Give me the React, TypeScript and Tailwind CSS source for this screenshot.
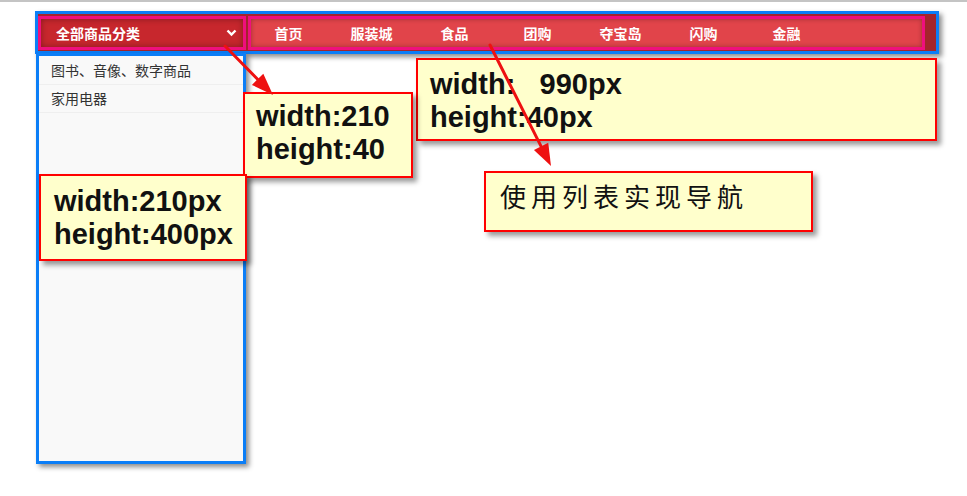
import React from 'react';

const navItems = ['首页', '服装城', '食品', '团购', '夺宝岛', '闪购', '金融'];
const categories = ['图书、音像、数字商品', '家用电器'];

// red callout arrow, head drawn as a filled triangle at (x2, y2)
const Arrow: React.FC<{ x1: number; y1: number; x2: number; y2: number }> = ({ x1, y1, x2, y2 }) => {
  const len = Math.hypot(x2 - x1, y2 - y1);
  const ux = (x2 - x1) / len;
  const uy = (y2 - y1) / len;
  const head = 22;
  const half = 8;
  const bx = x2 - ux * head;
  const by = y2 - uy * head;
  const pts = `${x2},${y2} ${bx - uy * half},${by + ux * half} ${bx + uy * half},${by - ux * half}`;
  return (
    <g>
      <line x1={x1} y1={y1} x2={bx} y2={by} stroke="#ee1111" strokeWidth={3} strokeLinecap="round" />
      <polygon points={pts} fill="#ee1111" />
    </g>
  );
};

const App: React.FC = () => {
  return (
    <div className="relative w-[967px] h-[496px] overflow-hidden bg-white border-t-2 border-[#c4c4c4] font-['Liberation_Sans','Noto_Sans_CJK_SC',sans-serif]">
      <div className="ml-[35px] pt-[9px] w-[904px]">
        {/* nav bar */}
        <nav className="flex items-start gap-[2px] h-[43px] border-[3px] border-[#0b7ef7] bg-[#a3252c] pt-[2px] pr-[11px] shadow-[3px_3px_5px_rgba(0,0,0,0.45)]">
          <div className="flex items-center justify-between w-[208px] h-[34px] border-[3px] border-[#ef0f7d] bg-[#c7272d] shadow-[inset_0_0_6px_rgba(0,0,0,0.35)] pl-[15px] pr-[6px] text-white font-bold text-[14px] font-['Noto_Sans_CJK_SC',sans-serif]">
            <span>全部商品分类</span>
            <svg width="11" height="8" viewBox="0 0 11 8">
              <path d="M1.5 1.5 L5.5 5.5 L9.5 1.5" fill="none" stroke="#ffffff" strokeWidth="2.4" />
            </svg>
          </div>
          <ul className="flex flex-1 h-[34px] border-[3px] border-[#ef0f7d] bg-[#e1444a] shadow-[inset_0_0_5px_rgba(0,0,0,0.3)] pl-0">
            {navItems.map((item, i) => (
              <li
                key={item}
                className={`w-[83px] h-[28px] flex items-center justify-center text-white font-bold text-[14px] font-['Noto_Sans_CJK_SC',sans-serif] ${i === 0 ? '-ml-[4px]' : ''}`}
              >
                {item}
              </li>
            ))}
          </ul>
        </nav>

        {/* category sidebar */}
        <aside className="ml-[1px] -mt-[1px] w-[210px] h-[411px] border-[3px] border-[#0b7ef7] bg-[#f9f9f9] shadow-[3px_3px_5px_rgba(0,0,0,0.45)]">
          <ul className="pt-[1px]">
            {categories.map((c) => (
              <li
                key={c}
                className="h-[28px] flex items-center pl-[12px] border-b border-[#efefef] text-[14px] text-[#333333] font-['Noto_Sans_CJK_SC',sans-serif]"
              >
                {c}
              </li>
            ))}
          </ul>
        </aside>
      </div>

      {/* annotations */}
      <div className="absolute left-[416px] top-[56px] w-[521px] h-[83px] border-2 border-[#ff0000] bg-[#ffffcc] shadow-[4px_4px_5px_rgba(0,0,0,0.4)] pl-[12px] pt-[8px] text-[29px] leading-[33px] font-bold text-[#111111] whitespace-pre">
        <div>width:   990px</div>
        <div>height:40px</div>
      </div>
      <div className="absolute left-[243px] top-[90px] w-[170px] h-[86px] border-2 border-[#ff0000] bg-[#ffffcc] shadow-[4px_4px_5px_rgba(0,0,0,0.4)] pl-[11px] pt-[6px] text-[29px] leading-[33px] font-bold text-[#111111]">
        <div>width:210</div>
        <div>height:40</div>
      </div>
      <div className="absolute left-[39px] top-[172px] w-[208px] h-[87px] border-2 border-[#ff0000] bg-[#ffffcc] shadow-[4px_4px_5px_rgba(0,0,0,0.4)] pl-[13px] pt-[9px] text-[29px] leading-[33px] font-bold text-[#111111]">
        <div>width:210px</div>
        <div>height:400px</div>
      </div>
      <div className="absolute left-[484px] top-[169px] w-[329px] h-[61px] border-2 border-[#ff0000] bg-[#ffffcc] shadow-[4px_4px_5px_rgba(0,0,0,0.4)] pl-[14px] pt-[8px] text-[26px] leading-[30px] tracking-[5px] text-[#111111] font-['Noto_Sans_CJK_SC',sans-serif]">
        使用列表实现导航
      </div>

      <svg className="absolute left-0 top-0 pointer-events-none" width="967" height="496">
        <Arrow x1={225} y1={44} x2={273} y2={93} />
        <Arrow x1={490} y1={43} x2={551} y2={164} />
      </svg>
    </div>
  );
};

export default App;
